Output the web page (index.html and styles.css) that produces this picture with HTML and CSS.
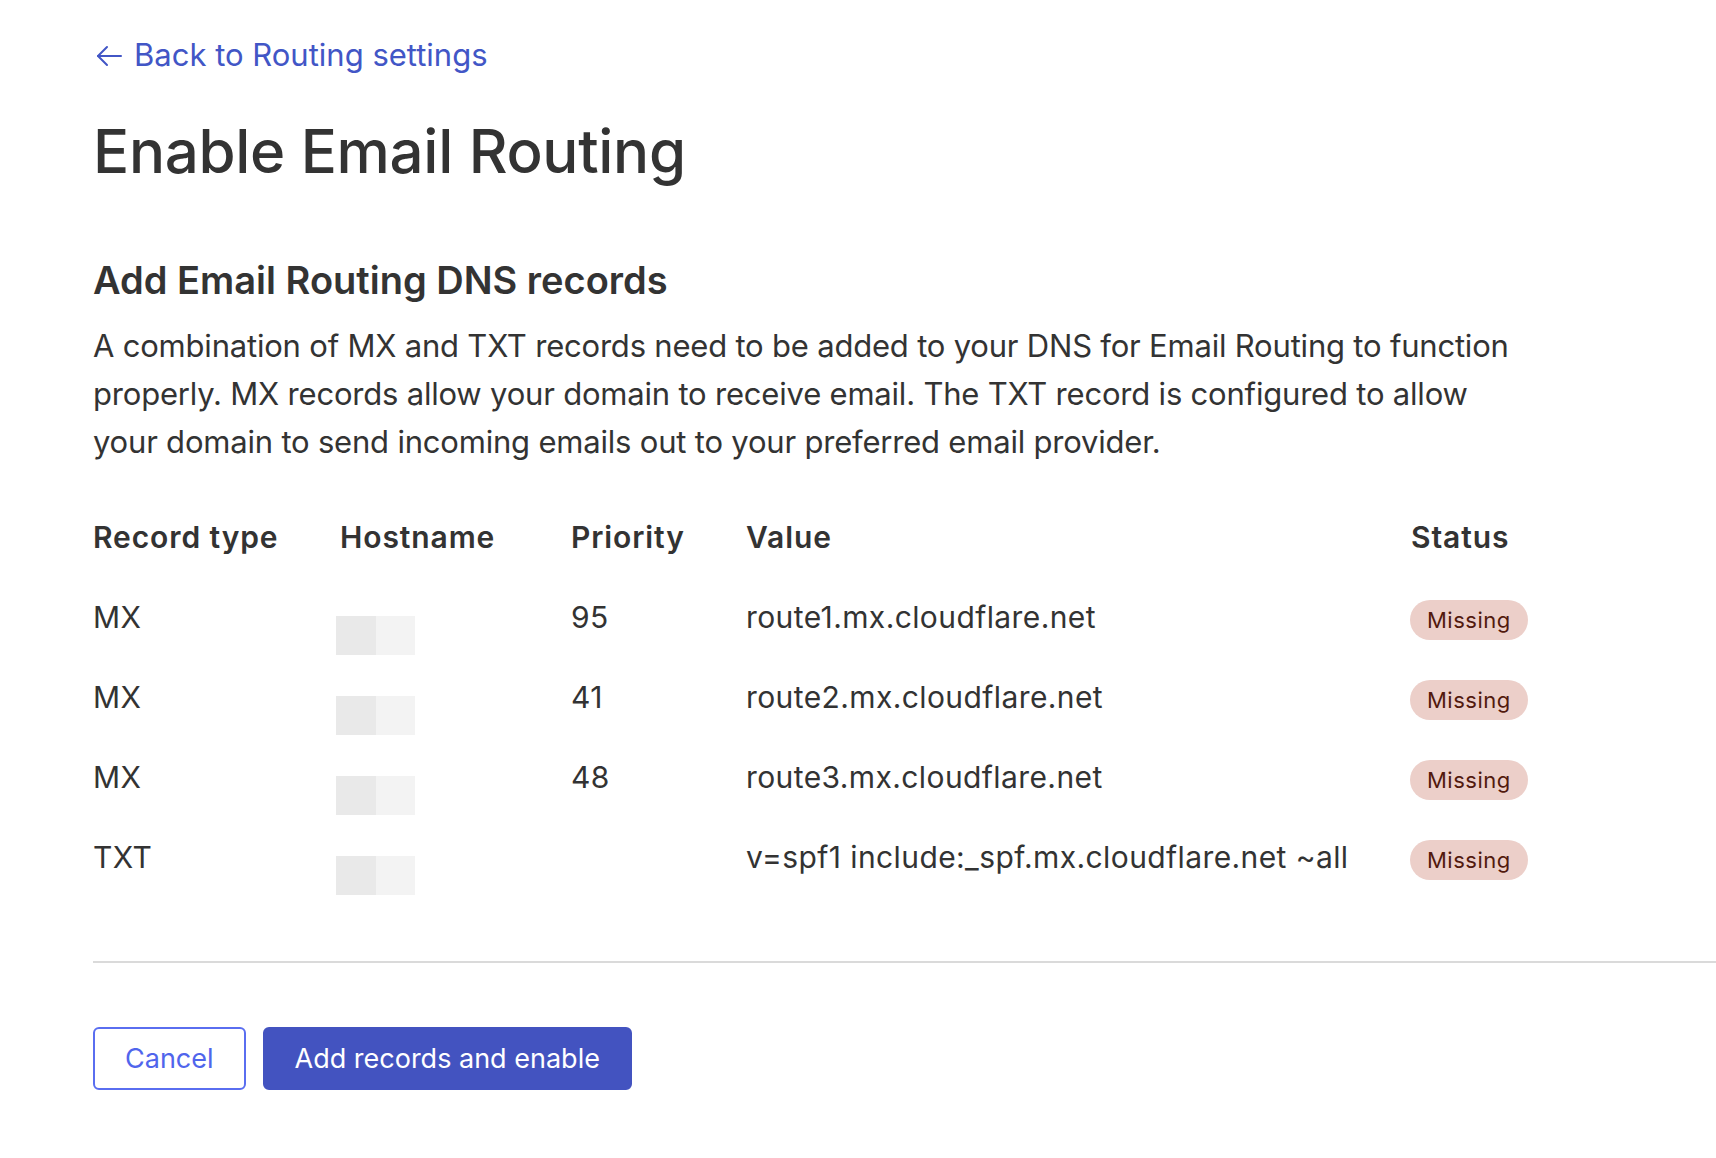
FILE: index.html
```html
<!DOCTYPE html>
<html lang="en">
<head>
<meta charset="utf-8">
<title>Enable Email Routing</title>
<link rel="stylesheet" href="styles.css">
</head>
<body>
<main class="page">
  <div class="content">
    <a class="back" href="#">
      <svg class="back-icon" width="26" height="22" viewBox="0 0 26 22" fill="none" stroke="currentColor" stroke-width="2" stroke-linecap="round" stroke-linejoin="round">
        <path d="M25 11H2"/>
        <path d="M11 2L2 11L11 20"/>
      </svg>
      <span>Back to Routing settings</span>
    </a>
    <h1 class="title">Enable Email Routing</h1>
    <h2 class="subtitle">Add Email Routing DNS records</h2>
    <p class="desc">A combination of MX and TXT records need to be added to your DNS for Email Routing to function properly. MX records allow your domain to receive email. The TXT record is configured to allow your domain to send incoming emails out to your preferred email provider.</p>

    <div class="records">
      <div class="row head">
        <div class="cell">Record type</div>
        <div class="cell">Hostname</div>
        <div class="cell">Priority</div>
        <div class="cell">Value</div>
        <div class="cell">Status</div>
      </div>
      <div class="row">
        <div class="cell">MX</div>
        <div class="cell"><span class="blur"><i></i><i></i></span></div>
        <div class="cell">95</div>
        <div class="cell">route1.mx.cloudflare.net</div>
        <div class="cell"><span class="badge">Missing</span></div>
      </div>
      <div class="row">
        <div class="cell">MX</div>
        <div class="cell"><span class="blur"><i></i><i></i></span></div>
        <div class="cell">41</div>
        <div class="cell">route2.mx.cloudflare.net</div>
        <div class="cell"><span class="badge">Missing</span></div>
      </div>
      <div class="row">
        <div class="cell">MX</div>
        <div class="cell"><span class="blur"><i></i><i></i></span></div>
        <div class="cell">48</div>
        <div class="cell">route3.mx.cloudflare.net</div>
        <div class="cell"><span class="badge">Missing</span></div>
      </div>
      <div class="row">
        <div class="cell">TXT</div>
        <div class="cell"><span class="blur"><i></i><i></i></span></div>
        <div class="cell"></div>
        <div class="cell">v=spf1 include:_spf.mx.cloudflare.net ~all</div>
        <div class="cell"><span class="badge">Missing</span></div>
      </div>
    </div>
  </div>

  <div class="footer">
    <div class="actions">
      <button class="btn btn-outline" type="button">Cancel</button>
      <button class="btn btn-primary" type="button">Add records and enable</button>
    </div>
  </div>
</main>
</body>
</html>
```

FILE: styles.css
```css
* { box-sizing: border-box; }

html, body {
  margin: 0;
  padding: 0;
  background: #ffffff;
}

body {
  font-family: Inter, "Noto Sans", "Liberation Sans", sans-serif;
  color: #333333;
}

.page {
  padding-left: 93px;
}

.content {
  padding-top: 31px;
}

.back {
  display: inline-flex;
  align-items: center;
  gap: 12px;
  color: #4256c6;
  text-decoration: none;
  font-size: 31px;
  line-height: 48px;
  font-weight: 400;
}

.back-icon {
  margin-left: 3px;
  margin-top: 2px;
}

.title {
  margin: 36px 0 0;
  font-size: 60px;
  line-height: 72px;
  font-weight: 500;
  color: #333333;
  letter-spacing: -0.3px;
}

.subtitle {
  margin: 69px 0 0;
  font-size: 38px;
  line-height: 48px;
  font-weight: 600;
  color: #333333;
}

.desc {
  margin: 18px 0 0;
  max-width: 1432px;
  font-size: 31px;
  line-height: 48px;
  font-weight: 400;
  letter-spacing: -0.2px;
  color: #333333;
}

.records {
  margin-top: 51px;
}

.row {
  display: grid;
  grid-template-columns: 247px 231px 175px 665px 1fr;
  height: 80px;
  align-items: start;
  font-size: 30px;
  line-height: 40px;
  letter-spacing: 0.4px;
}

.row.head {
  font-weight: 600;
  letter-spacing: 0.9px;
}

.blur {
  display: flex;
  width: 79px;
  height: 39px;
  margin-top: 19px;
  margin-left: -4px;
}

.blur i {
  flex: 1;
  background: #e9e9e9;
}

.blur i + i {
  background: #f3f3f3;
}

.badge {
  display: inline-block;
  margin-top: 2px;
  margin-left: -1px;
  height: 40px;
  padding: 0 17px;
  border-radius: 20px;
  background: #eccfc9;
  color: #521a0e;
  font-size: 22px;
  line-height: 40px;
  letter-spacing: 0.5px;
}

.footer {
  margin-top: 44px;
  border-top: 2px solid #dadada;
  padding-top: 64px;
}

.actions {
  display: flex;
  gap: 17px;
}

.btn {
  height: 63px;
  border-radius: 6px;
  font-family: inherit;
  font-size: 27px;
  font-weight: 400;
  padding: 0 30px;
  cursor: pointer;
}

.btn-outline {
  background: #ffffff;
  border: 2px solid #5a6ef0;
  color: #5065ec;
}

.btn-primary {
  background: #4353c0;
  border: 2px solid #4353c0;
  color: #ffffff;
}
```
